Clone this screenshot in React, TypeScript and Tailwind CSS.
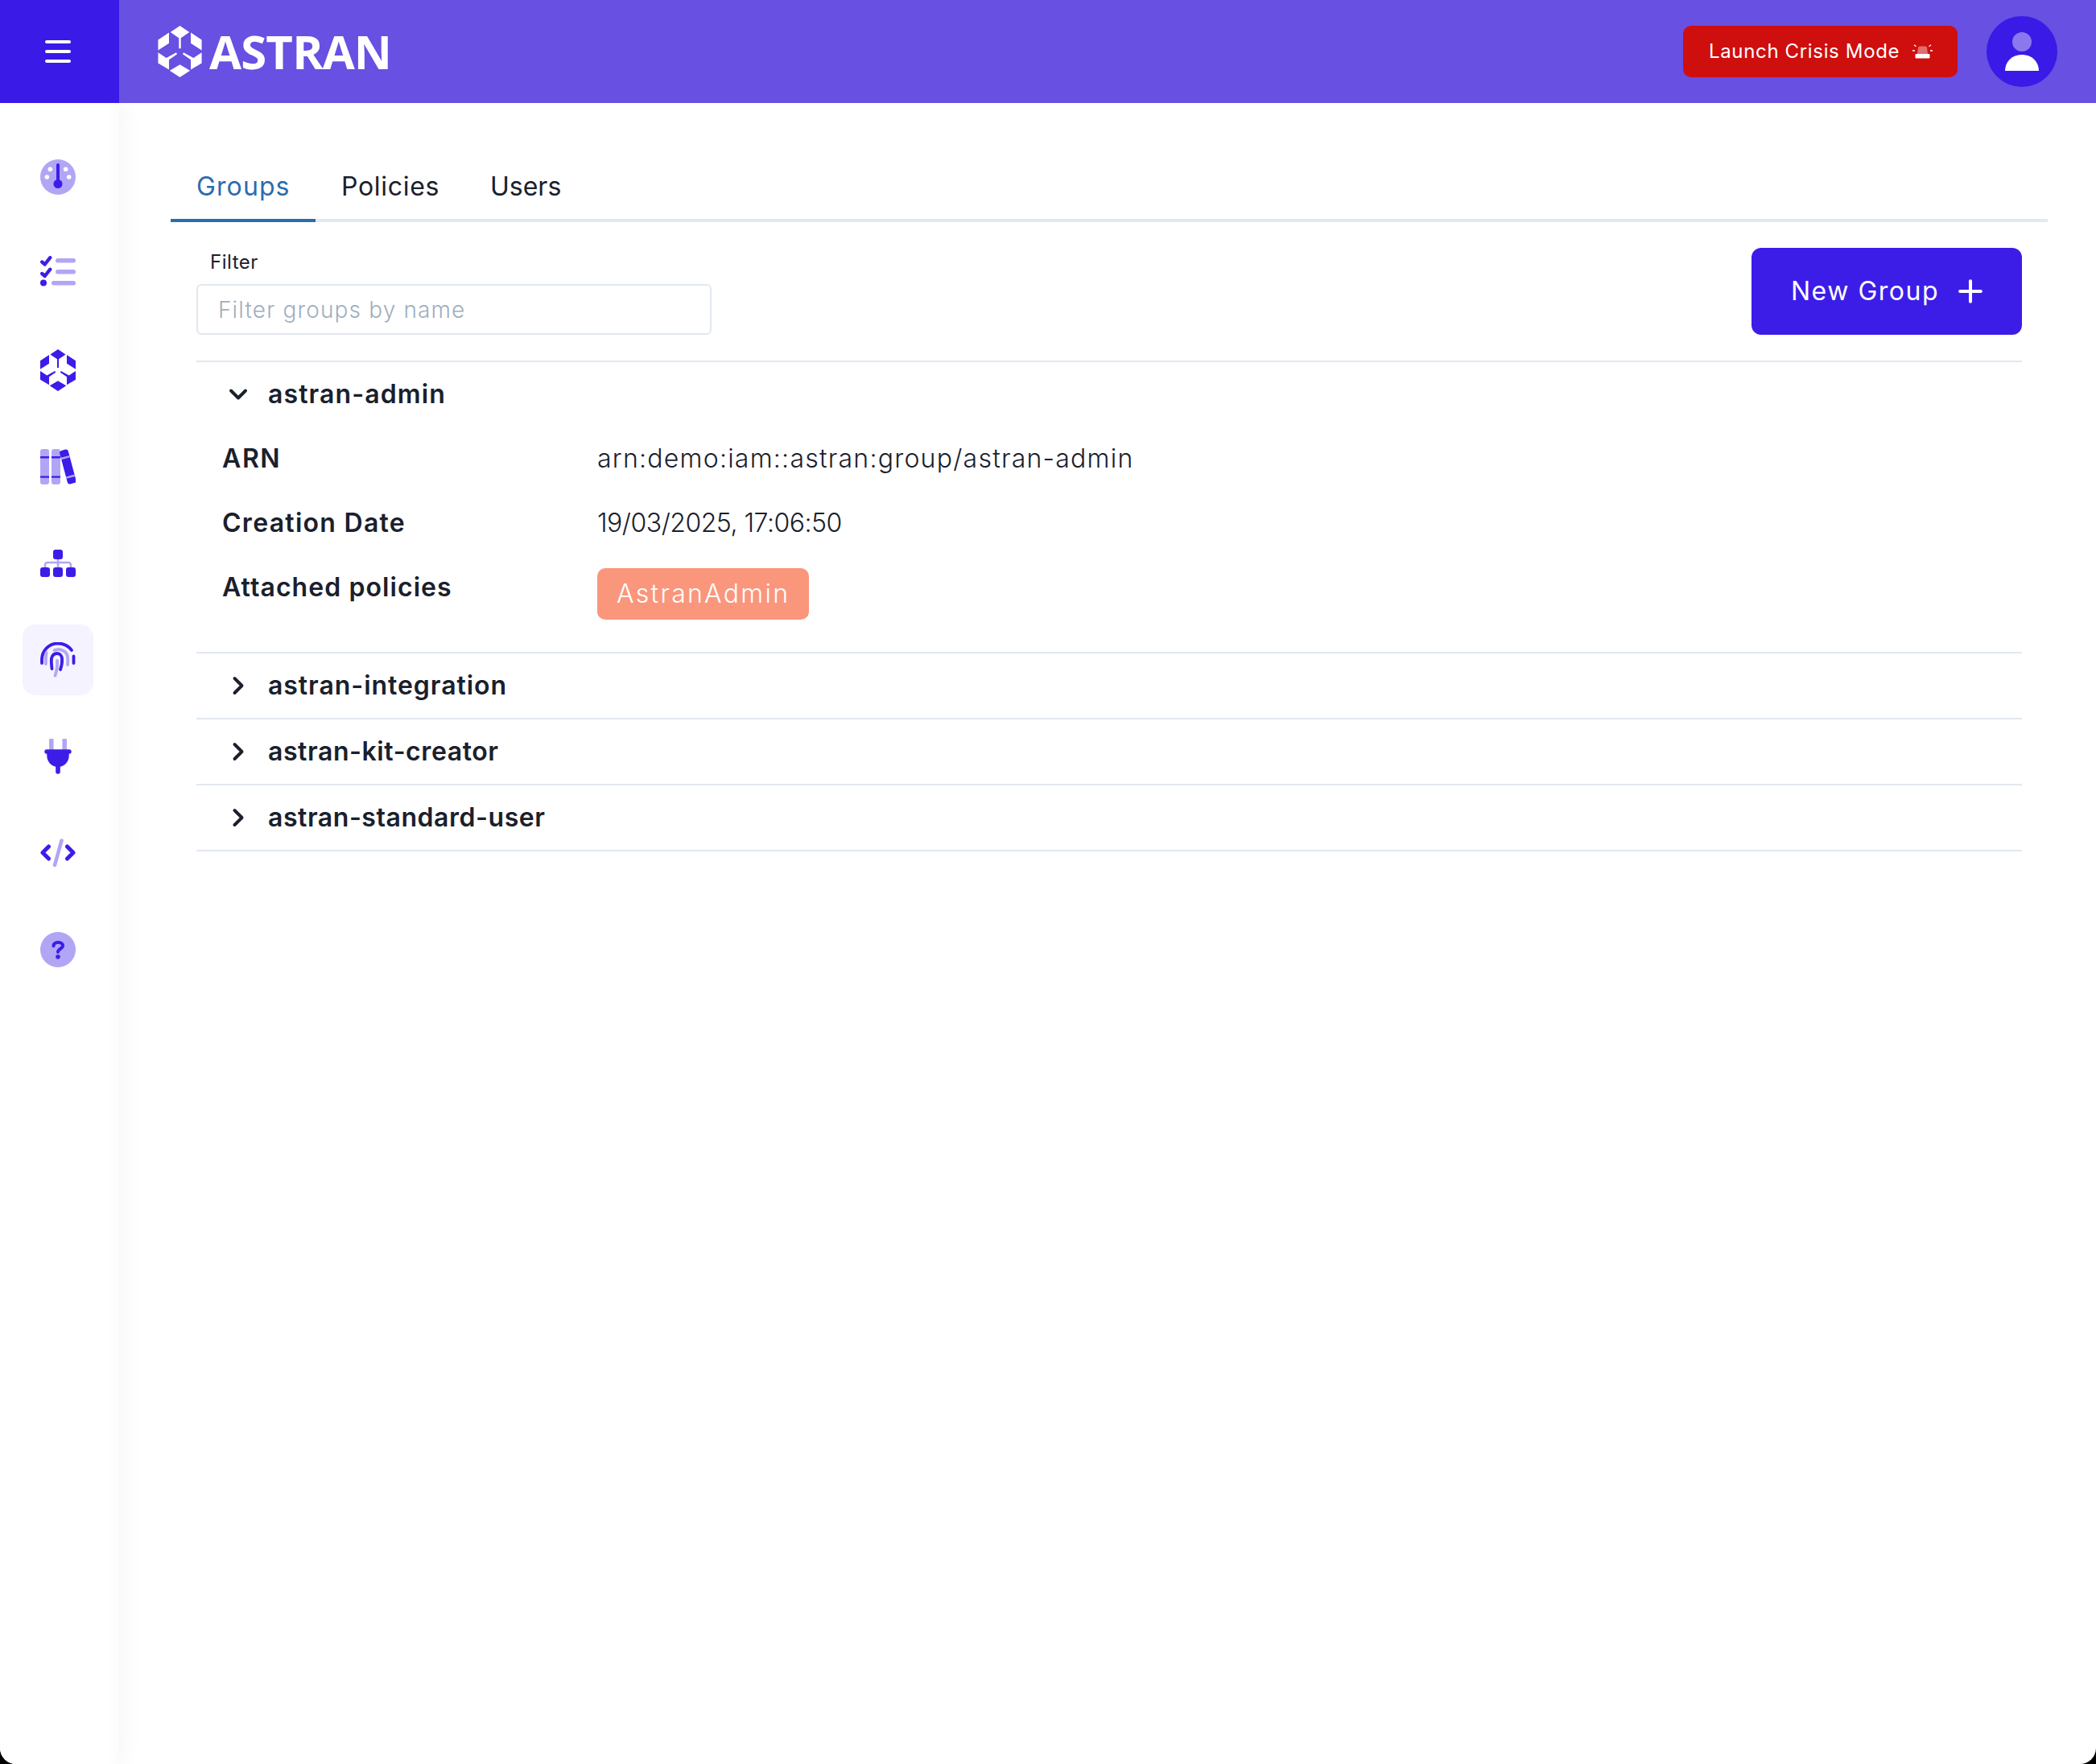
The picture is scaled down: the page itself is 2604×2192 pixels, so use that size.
import { ChevronDown, ChevronRight, Plus } from "lucide-react";

const DARK = "#3C1DE8";
const LIGHT = "#B1A6F5";

// ── Icons ──────────────────────────────────────────────
function CubeMark({ color, className }: { color: string; className: string }) {
    return (
        <svg viewBox="0 0 44 52" className={className} fill={color}>
            <path d="M22 0l9.6 6.4L23 12.3V23h-2V12.3L12.4 6.4z" />
            <path d="M0 14.3L11 7v10.7L0 24.7zM33 7l11 7.3v10.4l-11-7z" />
            <path d="M0 27l8.3 5.6 10-5.6.9 1.7L11 34.3v10L0 37.7zM44 27l-8.3 5.6-10-5.6-.9 1.7 8.2 5.6v10l11-6.6z" />
            <path d="M22 39.3l10.3 6L22 52l-10.3-6.7z" />
        </svg>
    );
}

function GaugeIcon() {
    return (
        <svg viewBox="0 0 44 44" className="w-[44px] h-[44px]">
            <circle cx="22" cy="22" r="22" fill={LIGHT} />
            <g fill="#fff">
                <circle cx="12.3" cy="12.3" r="2.8" />
                <circle cx="31.7" cy="12.3" r="2.8" />
                <circle cx="8.3" cy="22" r="2.8" />
                <circle cx="35.7" cy="22" r="2.8" />
            </g>
            <path d="M22 7v24" stroke={DARK} strokeWidth="4" strokeLinecap="round" />
            <circle cx="22" cy="30.5" r="5.5" fill={DARK} />
        </svg>
    );
}

function TasksIcon() {
    return (
        <svg viewBox="0 0 44 44" className="w-[44px] h-[44px]">
            <path d="M2.200 7.500l3.500 3L12.300 2.200M2.200 22l3.500 3 6.600-8.300" fill="none" stroke={DARK} strokeWidth="4.300" strokeLinecap="round" strokeLinejoin="round" />
            <circle cx="4" cy="33.5" r="4" fill={DARK} />
            <g fill={LIGHT}>
                <rect x="19" y="3" width="25" height="5.4" rx="2.7" />
                <rect x="19" y="17" width="25" height="5.4" rx="2.7" />
                <rect x="14" y="31" width="30" height="5.4" rx="2.7" />
            </g>
        </svg>
    );
}

function BooksIcon() {
    return (
        <svg viewBox="0 0 44 44" className="w-[44px] h-[44px]">
            <rect x="0" y="0" width="11" height="44" rx="3" fill={LIGHT} />
            <rect x="14" y="0" width="11" height="44" rx="3" fill={LIGHT} />
            <path d="M0 9h25v2.4H0zM0 33.4h25v2.4H0z" fill={DARK} />
            <path d="M11 0h3v44h-3z" fill="#fff" />
            <g transform="rotate(-15 34.3 22)">
                <rect x="28.8" y="0.5" width="11" height="43" rx="3" fill={DARK} />
                <path d="M28.8 9h11v2.4h-11zM28.8 33.4h11v2.4h-11z" fill={LIGHT} />
            </g>
        </svg>
    );
}

function TreeIcon() {
    return (
        <svg viewBox="0 0 44 34" className="w-[44px] h-[34px]">
            <path d="M6 22v-3a3 3 0 0 1 3-3h26a3 3 0 0 1 3 3v3M22 12v10" fill="none" stroke={LIGHT} strokeWidth="2.6" />
            <g fill={DARK}>
                <rect x="16" y="0" width="12" height="12" rx="3" />
                <rect x="0" y="22" width="12" height="12" rx="3" />
                <rect x="16" y="22" width="12" height="12" rx="3" />
                <rect x="32" y="22" width="12" height="12" rx="3" />
            </g>
        </svg>
    );
}

function FingerprintIcon() {
    return (
        <svg viewBox="0 0 44 44" className="w-[44px] h-[44px]" fill="none" strokeLinecap="round">
            <path d="M2 26V21C2.500 10 11 1.500 22 1.500 29 1.500 35 4.500 39 10M41.500 17.500V26" stroke={DARK} strokeWidth="3.800" />
            <path d="M7.500 13C6.800 18 6.500 22 6.800 27M17.500 10C25 7.500 33 11 34 18 34.500 22 34.300 25 34 28M21 23C21.500 30 20.500 36 18.500 41.500" stroke={LIGHT} strokeWidth="3.800" />
            <path d="M14.500 33C14 28 13.500 24 14 20 15 16 18 14 21 14 24.500 14 27 17 27 21 27.500 26 26.500 30 25 34" stroke={DARK} strokeWidth="3.800" />
        </svg>
    );
}

function PlugIcon() {
    return (
        <svg viewBox="0 0 44 44" className="w-[44px] h-[44px]">
            <path d="M13.800 2v12M30.200 2v12" stroke={LIGHT} strokeWidth="5.600" strokeLinecap="round" />
            <path d="M8 16h28" stroke={DARK} strokeWidth="5.400" strokeLinecap="round" />
            <path d="M8.300 16h27.400v5a13.700 14 0 0 1-27.400 0z" fill={DARK} />
            <path d="M22 32v9" stroke={DARK} strokeWidth="5.600" strokeLinecap="round" />
        </svg>
    );
}

function CodeIcon() {
    return (
        <svg viewBox="0 0 44 36" className="w-[44px] h-[36px]" fill="none" strokeLinecap="round" strokeLinejoin="round">
            <path d="M10.500 10L3 17.500 10.500 25M33.500 10L41 17.500 33.500 25" stroke={DARK} strokeWidth="5" />
            <path d="M26.500 2.500L18 33" stroke={LIGHT} strokeWidth="4.600" />
        </svg>
    );
}

function HelpIcon() {
    return (
        <svg viewBox="0 0 44 44" className="w-[44px] h-[44px]">
            <circle cx="22" cy="22" r="22" fill={LIGHT} />
            <path d="M16.500 17.500C16.500 14.500 19 13 22.200 13 25.500 13 28 14.800 28 17.300 28 21 22 21 22 25" fill="none" stroke={DARK} strokeWidth="4" strokeLinecap="round" />
            <circle cx="22" cy="31" r="2.800" fill={DARK} />
        </svg>
    );
}

function AlarmIcon() {
    return (
        <svg viewBox="0 0 25 18" className="w-[25px] h-[18px]">
            <path d="M6 12l1-8a2 2 0 0 1 2-1.500h7a2 2 0 0 1 2 1.500l1 8z" fill="#fff" fillOpacity="0.4" />
            <rect x="3.500" y="12" width="18" height="5.500" rx="1" fill="#fff" />
            <path d="M0 8h3M22 8h3M2 .8l2.500 2M23 .8l-2.500 2" stroke="#fff" strokeWidth="1.400" />
        </svg>
    );
}

// ── Data ──────────────────────────────────────────────
const navItems = [
    { id: "dashboard", icon: <GaugeIcon /> },
    { id: "tasks", icon: <TasksIcon /> },
    { id: "kits", icon: <CubeMark color={DARK} className="w-[44px] h-[52px]" /> },
    { id: "library", icon: <BooksIcon /> },
    { id: "orgs", icon: <TreeIcon /> },
    { id: "iam", icon: <FingerprintIcon />, active: true },
    { id: "plugins", icon: <PlugIcon /> },
    { id: "api", icon: <CodeIcon /> },
    { id: "help", icon: <HelpIcon /> },
];

// tracking per row: stand-in font is narrower than the original, each string differs
const collapsedGroups = [
    { name: "astran-integration", tracking: "tracking-[0.95px]" },
    { name: "astran-kit-creator", tracking: "tracking-[0.58px]" },
    { name: "astran-standard-user", tracking: "tracking-[0.55px]" },
];

// ── Page ──────────────────────────────────────────────
export default function App() {
    return (
        <div className="w-[2604px] h-[2192px] bg-black font-['Inter',sans-serif] text-[#1A202C]">
            <div className="h-full flex flex-col rounded-b-[20px] bg-white overflow-hidden">
                {/* Header */}
                <header className="relative z-10 h-[128px] shrink-0 flex items-center bg-[#6750E2]">
                    <div className="w-[148px] h-full pr-[4px] flex items-center justify-center bg-[#3A1AE6]">
                        <div className="w-[32px] flex flex-col gap-[8px]">
                            <span className="h-[4px] rounded-full bg-white" />
                            <span className="h-[4px] rounded-full bg-white" />
                            <span className="h-[4px] rounded-full bg-white" />
                        </div>
                    </div>
                    <div className="ml-[48px] flex items-center gap-[9px]">
                        <CubeMark color="#fff" className="w-[55px] h-[64px]" />
                        <span className="font-['Open_Sans',sans-serif] text-[58px] leading-none font-bold text-white tracking-[-0.8px]">ASTRAN</span>
                    </div>
                    <div className="ml-auto mr-[48px] flex items-center gap-[36px]">
                        <button className="h-[64px] w-[341px] pl-[32px] flex items-center gap-[16px] rounded-[10px] bg-[#CF0E0E] text-white text-[24px] tracking-[0.65px]">
                            Launch Crisis Mode
                            <AlarmIcon />
                        </button>
                        <div className="w-[88px] h-[88px] rounded-full bg-[#3A1AE6] flex flex-col items-center justify-center gap-[4px]">
                            <span className="w-[24px] h-[24px] rounded-full bg-[#8B78EE]" />
                            <span className="w-[42px] h-[20px] rounded-t-full bg-white" />
                        </div>
                    </div>
                </header>

                <div className="flex-1 flex min-h-0">
                    {/* Sidebar */}
                    <nav className="w-[148px] shrink-0 pt-[48px] pr-[4px] flex flex-col items-center gap-[32px] bg-white shadow-[0_0_30px_rgba(0,0,0,0.06),inset_-14px_0_20px_-14px_rgba(0,0,0,0.03)]">
                        {navItems.map((item) => (
                            <div
                                key={item.id}
                                className={`w-[88px] h-[88px] flex items-center justify-center rounded-[16px] ${item.active ? "bg-[#F5F3FF]" : ""}`}
                            >
                                {item.icon}
                            </div>
                        ))}
                    </nav>

                    {/* Content */}
                    <main className="flex-1 min-w-0 pt-[60px] pl-[64px] pr-[60px]">
                        <div className="flex h-[88px] border-b-[4px] border-[#E2E8F0] text-[32px]">
                            <div className="h-[88px] w-[180px] px-[32px] pt-[4px] flex items-center border-b-[4px] border-[#2B6CB0] text-[#2B6CB0] tracking-[1.1px]">Groups</div>
                            <div className="h-[84px] w-[185px] px-[32px] pt-[4px] flex items-center tracking-[0.7px]">Policies</div>
                            <div className="h-[84px] px-[32px] pt-[4px] flex items-center">Users</div>
                        </div>

                        <div className="px-[32px]">
                            <div className="pt-[32px] pb-[32px] flex items-start justify-between">
                                <div>
                                    <label className="block pl-[17px] mb-[9px] text-[24px] leading-[36px] tracking-[0.5px]">Filter</label>
                                    <input
                                        placeholder="Filter groups by name"
                                        className="block w-[640px] h-[63px] px-[25px] border-2 border-[#E2E8F0] rounded-[6px] text-[28px] font-light tracking-[1.15px] placeholder:text-[#A0AEC0]"
                                    />
                                </div>
                                <button className="w-[336px] h-[108px] pl-[49px] flex items-center gap-[17px] rounded-[12px] bg-[#3C1DE8] text-white text-[32px] tracking-[1.5px]">
                                    New Group
                                    <Plus size={44} strokeWidth={2.2} />
                                </button>
                            </div>

                            <div className="border-t-2 border-[#E2E8F0]">
                                <div className="h-[80px] pl-[34px] flex items-center gap-[19px] text-[32px] font-semibold tracking-[1.1px]">
                                    <ChevronDown size={36} strokeWidth={2.6} />
                                    astran-admin
                                </div>
                                <div className="pl-[32px] grid grid-cols-[466px_1fr] text-[32px] leading-[80px]">
                                    <div className="font-semibold tracking-[1.6px]">ARN</div>
                                    <div className="font-light tracking-[1.24px]">arn:demo:iam::astran:group/astran-admin</div>
                                    <div className="font-semibold tracking-[1.28px]">Creation Date</div>
                                    <div className="font-light tracking-[-0.5px]">19/03/2025, 17:06:50</div>
                                    <div className="font-semibold tracking-[1.07px]">Attached policies</div>
                                    <div className="pt-[16px] pb-[40px] flex items-start">
                                        <span className="h-[64px] px-[24px] rounded-[10px] bg-[#FA967C] text-white font-light leading-[64px] tracking-[2.26px]">AstranAdmin</span>
                                    </div>
                                </div>
                            </div>

                            {collapsedGroups.map((group) => (
                                <div key={group.name} className={`border-t-2 border-[#E2E8F0] h-[82px] pl-[34px] flex items-center gap-[19px] text-[32px] font-semibold ${group.tracking}`}>
                                    <ChevronRight size={36} strokeWidth={2.6} />
                                    {group.name}
                                </div>
                            ))}
                            <div className="border-t-2 border-[#E2E8F0]" />
                        </div>
                    </main>
                </div>
            </div>
        </div>
    );
}
